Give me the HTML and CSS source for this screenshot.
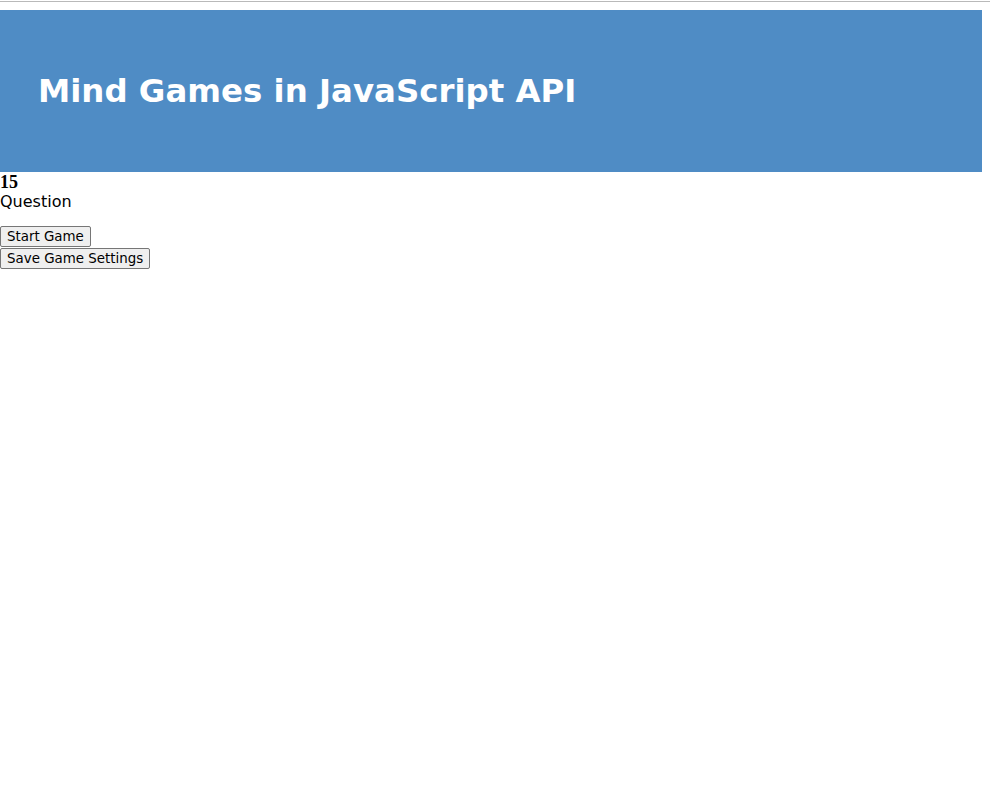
FILE: index.html
```html
<!DOCTYPE html>
<html>
<head>
<meta charset="utf-8">
<link rel="stylesheet" href="styles.css">
</head>
<body>
<div class="topline"></div>
<header class="banner">
  <h1 class="title">Mind Games in JavaScript API</h1>
</header>
<main class="game">
  <div class="score">15</div>
  <div class="question">Question</div>
  <div class="controls">
    <button class="btn">Start Game</button>
    <button class="btn">Save Game Settings</button>
  </div>
</main>
</body>
</html>
```
FILE: styles.css
```css
html, body {
  margin: 0;
  padding: 0;
  background: #fff;
}
.topline {
  height: 1px;
  margin-top: 1px;
  background: #b9b9b9;
}
.banner {
  margin-top: 8px;
  width: 982px;
  height: 162px;
  background: #4f8cc5;
  display: flex;
  align-items: center;
  padding-left: 38px;
  box-sizing: border-box;
}
.title {
  margin: 0;
  color: #fff;
  font-family: "DejaVu Sans", Verdana, sans-serif;
  font-weight: bold;
  font-size: 32.4px;
}
.game {
  font-family: "DejaVu Sans", Verdana, sans-serif;
}
.score {
  font-family: "Liberation Serif", serif;
  font-weight: bold;
  font-size: 18px;
  line-height: 19px;
  margin-top: 1px;
}
.question {
  font-size: 16px;
  line-height: 19px;
}
.controls {
  margin-top: 15px;
  display: flex;
  flex-direction: column;
  align-items: flex-start;
  gap: 1px;
}
.btn {
  font-family: "DejaVu Sans", Verdana, sans-serif;
  font-size: 13.4px;
  height: 21px;
  padding: 0 6px;
  margin: 0;
  background: #efefef;
  border: 1px solid #767676;
  border-radius: 2px;
  color: #000;
}
```
